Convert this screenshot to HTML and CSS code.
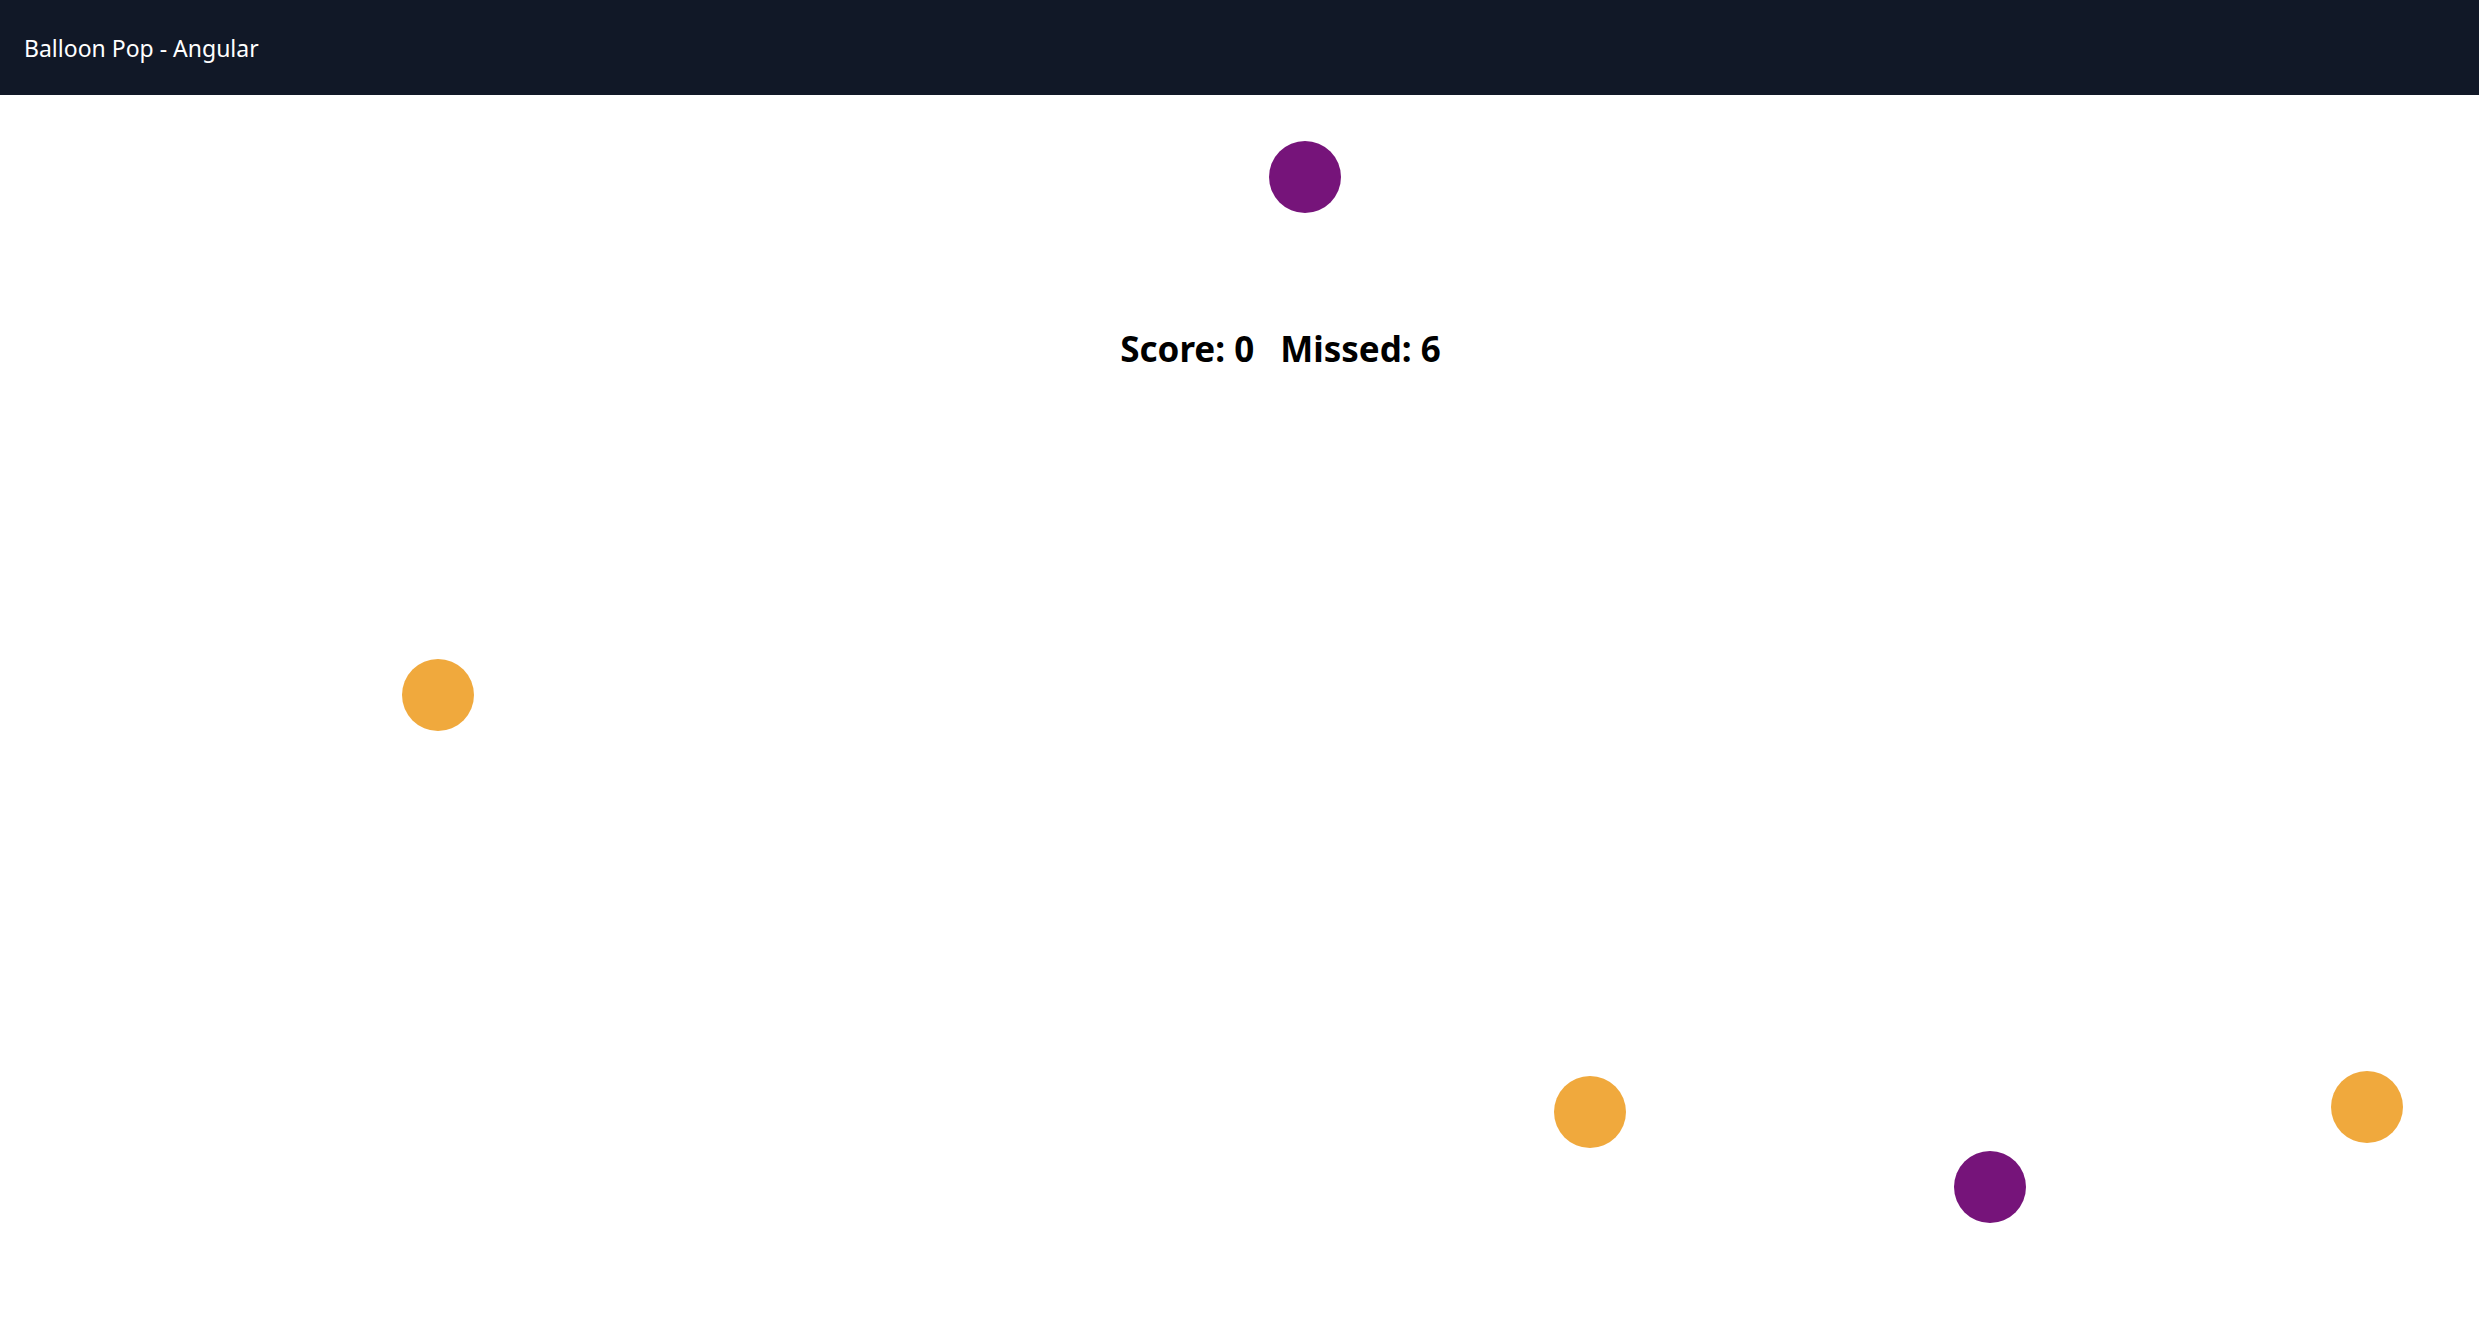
FILE: index.html
```html
<!DOCTYPE html>
<html lang="en">
<head>
<meta charset="utf-8">
<title>Balloon Pop - Angular</title>
<link rel="stylesheet" href="styles.css">
</head>
<body>
<header class="topbar">Balloon Pop - Angular</header>
<main class="game">
  <div class="score"><span>Score: 0</span><span>Missed: 6</span></div>
  <div class="balloon purple" style="left:1269px; top:46px;"></div>
  <div class="balloon orange" style="left:402px; top:564px;"></div>
  <div class="balloon orange" style="left:1554px; top:981px;"></div>
  <div class="balloon purple" style="left:1954px; top:1056px;"></div>
  <div class="balloon orange" style="left:2331px; top:976px;"></div>
</main>
</body>
</html>
```
FILE: styles.css
```css
html, body {
  margin: 0;
  padding: 0;
  height: 100%;
  background: #ffffff;
  overflow: hidden;
  font-family: "Noto Sans", "Open Sans", "DejaVu Sans", sans-serif;
}
.topbar {
  height: 95px;
  background: #111827;
  color: #ffffff;
  display: flex;
  align-items: center;
  padding-left: 24px;
  font-size: 23px;
  box-sizing: border-box;
}
.game {
  position: relative;
  height: calc(100% - 95px);
}
.score {
  display: flex;
  justify-content: center;
  gap: 26px;
  padding-left: 82px;
  padding-top: 230px;
  font-size: 35px;
  font-weight: 700;
  line-height: 48px;
  color: #000000;
}
.balloon {
  position: absolute;
  width: 72px;
  height: 72px;
  border-radius: 50%;
}
.purple { background: #76147a; }
.orange { background: #f0a93d; }
```
